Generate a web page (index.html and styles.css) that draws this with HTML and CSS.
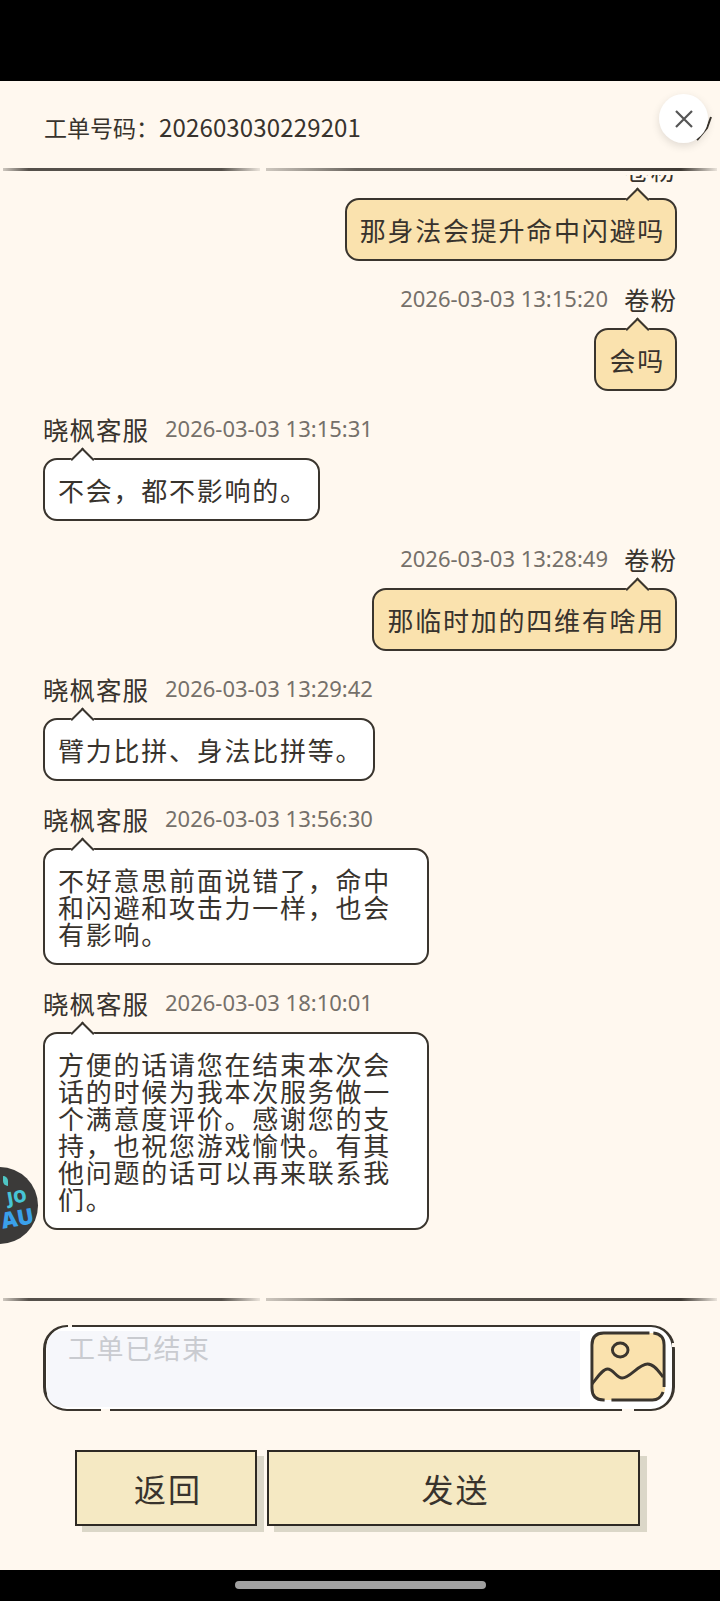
FILE: index.html
```html
<!DOCTYPE html>
<html lang="zh-CN">
<head>
    <meta charset="UTF-8">
    <title>工单详情</title>
    <link rel="stylesheet" href="styles.css">
</head>
<body>
    <div class="screen">
        <div class="status-bar"></div>
        <div class="page">
            <div class="ticket-head">工单号码：<span class="ticket-no">202603030229201</span></div>
            <svg class="head-scratch" width="20" height="28" viewBox="0 0 20 28"><path d="M17 1L13 12L3 24" stroke="#3a352e" stroke-width="2" fill="none"/></svg>
            <button class="close-btn" type="button">
                <svg width="22" height="22" viewBox="0 0 22 22"><path d="M3 3L19 19M19 3L3 19" stroke="#555" stroke-width="2.2" fill="none"/></svg>
            </button>
            <div class="rule rule-top"><span class="rule-short"></span><span class="rule-long"></span></div>

            <div class="chat">
                <div class="msg mine first">
                    <div class="meta"><span class="name">卷粉</span></div>
                    <div class="bubble">那身法会提升命中闪避吗</div>
                </div>
                <div class="msg mine">
                    <div class="meta"><span class="time">2026-03-03 13:15:20</span><span class="name">卷粉</span></div>
                    <div class="bubble">会吗</div>
                </div>
                <div class="msg">
                    <div class="meta"><span class="name">晓枫客服</span><span class="time">2026-03-03 13:15:31</span></div>
                    <div class="bubble">不会，都不影响的。</div>
                </div>
                <div class="msg mine">
                    <div class="meta"><span class="time">2026-03-03 13:28:49</span><span class="name">卷粉</span></div>
                    <div class="bubble">那临时加的四维有啥用</div>
                </div>
                <div class="msg">
                    <div class="meta"><span class="name">晓枫客服</span><span class="time">2026-03-03 13:29:42</span></div>
                    <div class="bubble">臂力比拼、身法比拼等。</div>
                </div>
                <div class="msg">
                    <div class="meta"><span class="name">晓枫客服</span><span class="time">2026-03-03 13:56:30</span></div>
                    <div class="bubble">不好意思前面说错了，命中和闪避和攻击力一样，也会有影响。</div>
                </div>
                <div class="msg">
                    <div class="meta"><span class="name">晓枫客服</span><span class="time">2026-03-03 18:10:01</span></div>
                    <div class="bubble">方便的话请您在结束本次会话的时候为我本次服务做一个满意度评价。感谢您的支持，也祝您游戏愉快。有其他问题的话可以再来联系我们。</div>
                </div>
            </div>

            <div class="rule"><span class="rule-short"></span><span class="rule-long"></span></div>

            <div class="composer">
                <div class="input-box">工单已结束</div>
                <button class="pic-btn" type="button">
                    <svg width="77" height="71" viewBox="0 0 79 71" preserveAspectRatio="none">
                        <rect x="2" y="2" width="75" height="67" rx="12" fill="#fae2ae"/>
                        <g fill="none" stroke="#3a352e" stroke-width="3">
                            <path d="M61 2H14Q2 2 2 14V57Q2 69 14 69H15"/>
                            <path d="M65 2Q76 3 76 14V56"/>
                            <path d="M22 69H64Q72 69 75 61"/>
                            <ellipse cx="31" cy="19" rx="8" ry="7"/>
                            <path d="M2 53C8 46 13 38 18 38C24 38 27 47 33 47C41 47 50 33 59 33C66 33 71 41 75 46"/>
                        </g>
                    </svg>
                </button>
                <span class="nick nick-a"></span>
                <span class="nick nick-b"></span>
                <span class="nick nick-c"></span>
                <span class="nick nick-d"></span>
            </div>

            <div class="actions">
                <button class="sketch-btn back" type="button">返回</button>
                <button class="sketch-btn send" type="button">发送</button>
            </div>
        </div>
        <div class="nav-bar"><span class="home-pill"></span></div>

        <div class="float-ball">
            <span class="ball-leaf"></span>
            <span class="ball-top">JO</span>
            <span class="ball-bottom">AU</span>
        </div>
    </div>
</body>
</html>
```

FILE: styles.css
```css
* {
    box-sizing: border-box;
}
html, body {
    margin: 0;
    padding: 0;
    background: #000;
}
body {
    font-family: "Noto Sans CJK SC", "Noto Sans", sans-serif;
    color: #38332d;
}
button {
    font-family: inherit;
    color: inherit;
    padding: 0;
    cursor: pointer;
}
.screen {
    position: relative;
    width: 720px;
    height: 1601px;
    display: flex;
    flex-direction: column;
    overflow: hidden;
}
.status-bar {
    height: 81px;
    background: #000;
}
.nav-bar {
    height: 31px;
    background: #000;
    display: flex;
    justify-content: center;
    padding-top: 11px;
}
.home-pill {
    width: 251px;
    height: 8px;
    border-radius: 4px;
    background: #a0a0a0;
}
.page {
    position: relative;
    flex: 1;
    display: flex;
    flex-direction: column;
    background: #fff8ef;
}
.ticket-head {
    height: 87px;
    padding: 29px 0 0 44px;
    font-size: 23px;
    line-height: 34px;
}
.ticket-no {
    font-size: 24px;
    letter-spacing: 0.15px;
}
.head-scratch {
    position: absolute;
    top: 35px;
    right: 6px;
}
.close-btn {
    position: absolute;
    top: 13px;
    right: 12px;
    width: 49px;
    height: 49px;
    border: none;
    border-radius: 50%;
    background: #fff;
    box-shadow: 0 3px 8px rgba(0, 0, 0, 0.12);
    display: flex;
    align-items: center;
    justify-content: center;
}
.rule {
    height: 3px;
    display: flex;
    gap: 6px;
    padding: 0 3px;
}
.rule-top {
    margin-bottom: 4px;
}
.rule-short, .rule-long {
    height: 2.5px;
    background: linear-gradient(90deg, rgba(58, 53, 46, 0.25), #55504a 10%, #55504a 85%, rgba(58, 53, 46, 0.1));
}
.rule-short {
    width: 257px;
}
.rule-long {
    flex: 1;
    background: linear-gradient(90deg, rgba(58, 53, 46, 0.25), #6a655e 20%, #3f3a34 92%, rgba(58, 53, 46, 0.1));
}
.chat {
    height: 1123px;
    overflow: hidden;
    padding: 0 43px;
}
.msg {
    display: flex;
    flex-direction: column;
    align-items: flex-start;
    padding-bottom: 19px;
}
.msg.mine {
    align-items: flex-end;
}
.msg.first {
    margin-top: -25px;
}
.meta {
    height: 36px;
    display: flex;
    align-items: center;
    gap: 16px;
    margin-bottom: 12px;
}
.name {
    font-size: 25.5px;
    letter-spacing: 1px;
}
.time {
    font-family: "Noto Sans", sans-serif;
    font-size: 22px;
    color: #75706a;
}
.bubble {
    position: relative;
    max-width: 386px;
    padding: 16px 10px 16px 13px;
    border: 2px solid #3a352e;
    border-radius: 14px;
    background: #fff;
    font-size: 26px;
    line-height: 27px;
    letter-spacing: 1.75px;
}
.mine .bubble {
    background: #fae2ae;
}
.bubble::before {
    content: "";
    position: absolute;
    top: -9px;
    left: 29px;
    width: 15px;
    height: 15px;
    transform: rotate(45deg);
    background: inherit;
    border-left: 2px solid #3a352e;
    border-top: 2px solid #3a352e;
}
.mine .bubble::before {
    left: auto;
    right: 29px;
}
.composer {
    position: relative;
    height: 86px;
    margin: 24px 45px 0 43px;
    padding: 4px 5px 2px 1px;
    display: flex;
    align-items: flex-start;
    gap: 10px;
    background: #fff;
    border: solid #3a352e;
    border-width: 2px 3px;
    border-radius: 24px;
}
.input-box {
    flex: 1;
    height: 100%;
    padding: 0 21px;
    background: #f6f7fb;
    border-radius: 14px 0 0 14px;
    color: #c9cbd0;
    font-size: 27px;
    line-height: 34px;
    letter-spacing: 1.5px;
}
.pic-btn {
    border: none;
    background: none;
    display: flex;
}
/* little gaps in the hand drawn outline */
.nick {
    position: absolute;
    background: #fff8ef;
}
.nick-a {
    top: -2px;
    left: 22px;
    width: 4px;
    height: 2px;
}
.nick-b {
    bottom: -2px;
    left: 55px;
    width: 9px;
    height: 2px;
}
.nick-c {
    bottom: -2px;
    right: 38px;
    width: 12px;
    height: 2px;
}
.nick-d {
    top: 16px;
    right: -3px;
    width: 3px;
    height: 4px;
}
.actions {
    display: flex;
    gap: 10px;
    margin: 39px 0 0 75px;
}
.sketch-btn {
    height: 76px;
    padding-left: 4px;
    border: 2px solid #2e2a24;
    background: #f5e9c3;
    box-shadow: 7px 6px 0 #dbd7c8;
    font-size: 32px;
    letter-spacing: 2px;
}
.back {
    width: 182px;
}
.send {
    width: 373px;
}
.float-ball {
    position: absolute;
    top: 1167px;
    left: -39px;
    width: 77px;
    height: 77px;
    border-radius: 50%;
    background: #3b3a39;
    overflow: hidden;
    font-weight: 900;
    line-height: 1;
    font-family: "Noto Sans", sans-serif;
}
.ball-leaf {
    position: absolute;
    top: 9px;
    left: 42px;
    width: 5px;
    height: 10px;
    border-radius: 0 5px 0 5px;
    background: #4fc6c4;
}
.ball-top, .ball-bottom {
    position: absolute;
    transform: rotate(-10deg);
}
.ball-top {
    top: 21px;
    left: 46px;
    font-size: 17px;
    color: #47c4d6;
}
.ball-bottom {
    top: 39px;
    left: 40px;
    font-size: 22px;
    color: #3aa0ea;
}
```
